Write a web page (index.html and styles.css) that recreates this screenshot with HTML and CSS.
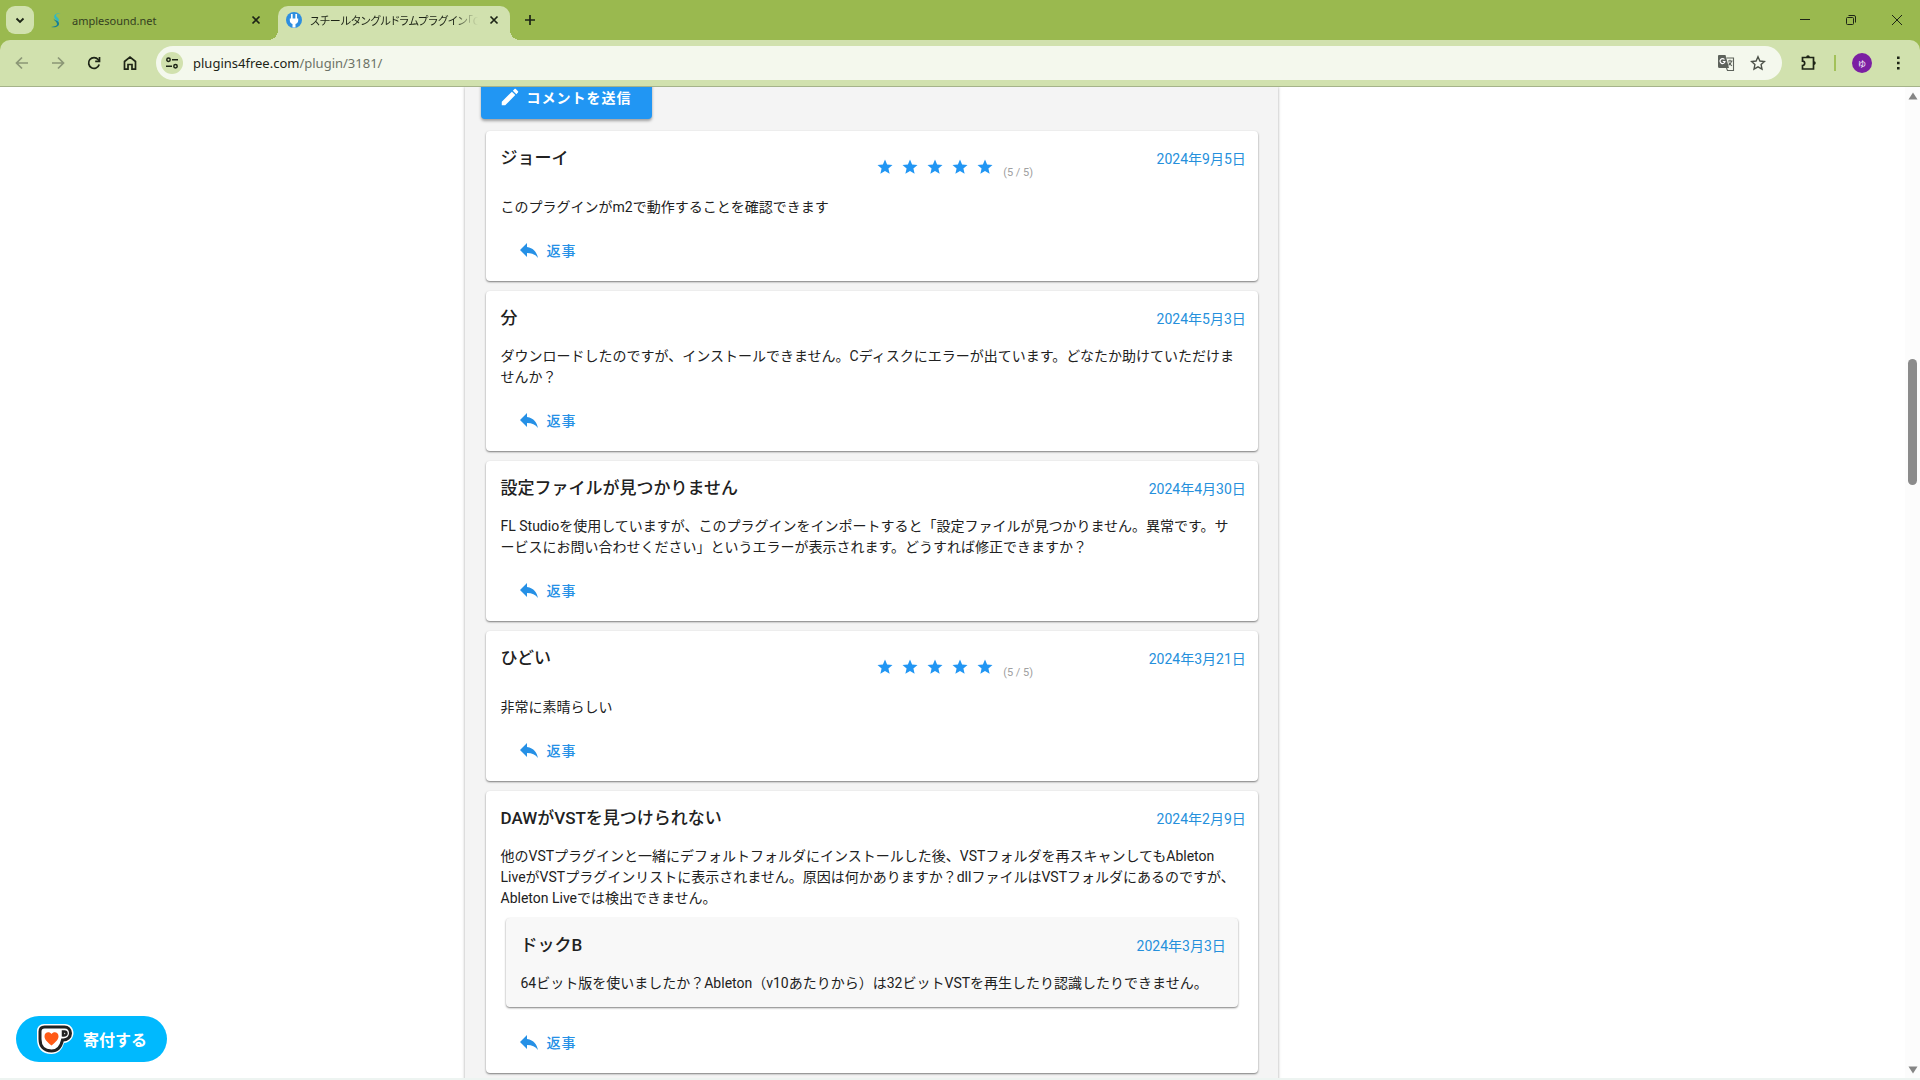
FILE: index.html
```html
<!DOCTYPE html>
<html lang="ja">
<head>
    <meta charset="UTF-8">
    <meta name="viewport" content="width=device-width, initial-scale=1.0">
    <title>スチールタングルドラムプラグイン「Cloud」</title>
    <link rel="stylesheet" href="styles.css">
</head>
<body>
    <!-- icons used more than once -->
    <svg class="defs" aria-hidden="true">
        <symbol id="i-star" viewBox="0 0 24 24"><path d="M12 17.27L18.18 21l-1.64-7.03L22 9.24l-7.19-.61L12 2 9.19 8.63 2 9.24l5.46 4.73L5.82 21z"/></symbol>
        <symbol id="i-reply" viewBox="0 0 24 24"><path d="M10 9V5l-7 7 7 7v-4.1c5 0 8.500 1.600 11 5.100-1-5-4-10-11-11z"/></symbol>
        <symbol id="i-close" viewBox="0 0 16 16"><path d="M4.500 4.500l7 7M11.500 4.500l-7 7" fill="none" stroke="currentColor" stroke-width="1.700"/></symbol>
    </svg>

    <header class="browser">
        <div class="tab-bar">
            <button class="tab-search" aria-label="タブを検索">
                <svg width="16" height="16" viewBox="0 0 16 16"><path d="M4.500 6.500L8 10l3.500-3.500" fill="none" stroke="currentColor" stroke-width="1.800"/></svg>
            </button>
            <div class="tab">
                <svg width="16" height="16" viewBox="0 0 16 16"><path d="M12.500 1C7 1 5.500 3.500 6.500 6c1 2 3 2.500 3 5l1.500-2.500C11 5.500 8 5 8 3.500 8 2 10 1.500 12.500 1z" fill="#2fb9c6"/><path d="M5.500 6.500C6 9 9 9.500 9 12c0 2-2.500 2.500-6 3 5.500 1 8.500-1 8-4-.500-2.500-4.500-2.500-5.500-4.500z" fill="#177f96"/></svg>
                <span class="tab-title">amplesound.net</span>
                <button class="tab-close" aria-label="タブを閉じる"><svg width="16" height="16"><use href="#i-close"/></svg></button>
            </div>
            <div class="tab active">
                <svg width="16" height="16" viewBox="0 0 16 16"><circle cx="8" cy="8" r="8" fill="#2d8ee0"/><path d="M5.800 2v5M10.200 2v5" stroke="#fff" stroke-width="1.700"/><path d="M3.800 6.500h8.400v2c0 1.800-1.200 3-2.700 3.500v3.500h-3V12C5 11.500 3.800 10.300 3.800 8.500z" fill="#fff"/></svg>
                <span class="tab-title">スチールタングルドラムプラグイン「Clou</span>
                <button class="tab-close" aria-label="タブを閉じる"><svg width="16" height="16"><use href="#i-close"/></svg></button>
            </div>
            <button class="new-tab" aria-label="新しいタブ">
                <svg width="16" height="16" viewBox="0 0 16 16"><path d="M8 3v10M3 8h10" fill="none" stroke="currentColor" stroke-width="1.700"/></svg>
            </button>
            <div class="window-buttons">
                <button aria-label="最小化"><svg class="line" width="12" height="12" viewBox="0 0 12 12"><path d="M1 5.500h10"/></svg></button>
                <button aria-label="元に戻す"><svg class="line" width="12" height="12" viewBox="0 0 12 12"><rect x="1.500" y="3.500" width="7" height="7" rx="1"/><path d="M3.500 1.500h5.500a1.500 1.500 0 0 1 1.500 1.500v5.500"/></svg></button>
                <button aria-label="閉じる"><svg class="line" width="12" height="12" viewBox="0 0 12 12"><path d="M1 1l10 10M11 1L1 11"/></svg></button>
            </div>
        </div>

        <div class="toolbar">
            <button class="nav off" aria-label="戻る"><svg width="16" height="16" viewBox="0 0 16 16"><path d="M14 8H3M8 2.500L2.500 8 8 13.500"/></svg></button>
            <button class="nav off" aria-label="進む"><svg width="16" height="16" viewBox="0 0 16 16"><path d="M2 8h11M8 2.500L13.500 8 8 13.500"/></svg></button>
            <button class="nav" aria-label="再読み込み"><svg width="16" height="16" viewBox="0 0 16 16"><path d="M13.200 9.500a5.400 5.400 0 1 1-1-5L13.500 6"/><path d="M13.500 2v4.300H9.200"/></svg></button>
            <button class="nav" aria-label="ホーム"><svg width="16" height="16" viewBox="0 0 16 16"><path d="M2.500 14.200V6.500L8 2l5.500 4.500v7.700H10V9.500H6v4.700z"/></svg></button>
            <div class="omnibox">
                <button class="site-info" aria-label="サイト情報">
                    <svg class="line" width="14" height="14" viewBox="0 0 14 14"><circle cx="3.500" cy="3.800" r="1.700"/><path d="M7 3.800h6M1 10.200h6"/><circle cx="10.500" cy="10.200" r="1.700"/></svg>
                </button>
                <div class="url">plugins4free.com<span>/plugin/3181/</span></div>
                <button class="box-icon" aria-label="翻訳">
                    <svg width="18" height="18" viewBox="0 0 18 18"><path d="M2 1h6.500l3.500 13H2.500A1.500 1.500 0 0 1 1 12.500V2a1 1 0 0 1 1-1z" fill="#5d625b"/><path d="M7.500 5.500A2.500 2.500 0 1 0 8 7.500H5.800" fill="none" stroke="#fff" stroke-width="1.200"/><path d="M9.500 4h7v12.500h-6l-1-2.500M11 7h4.500M13 5.800V7M14.500 7.300c-.500 2-1.500 3-3 4M11.800 8.500c.700 1.500 1.800 2.500 3.200 3.200" fill="none" stroke="#5d625b" stroke-width="1.100"/></svg>
                </button>
                <button class="box-icon" aria-label="ブックマーク">
                    <svg width="16" height="16" viewBox="0 0 16 16"><path d="M8 1.800l1.900 4.200 4.500.5-3.300 3.100.9 4.500L8 11.800l-4 2.300.9-4.500L1.600 6.500 6.100 6z" fill="none" stroke="currentColor" stroke-width="1.400"/></svg>
                </button>
            </div>
            <button class="nav extensions" aria-label="拡張機能"><svg width="18" height="18" viewBox="0 0 18 18"><path d="M2.500 3.500h11v11.500h-11v-3.500a2.200 2.200 0 0 0 0-4.400z"/><path d="M6.200 3a1.800 1.800 0 0 1 3.600 0zM14 7.300a1.800 1.800 0 0 1 0 3.600z" fill="currentColor" stroke="none"/></svg></button>
            <span class="divider"></span>
            <button class="avatar" aria-label="プロフィール">ゆ</button>
            <button class="nav menu" aria-label="メニュー"><svg width="16" height="16" viewBox="0 0 16 16"><path d="M7 1.500h2.600v2.600H7zM7 6.700h2.600v2.600H7zM7 11.900h2.600v2.600H7z" fill="currentColor" stroke="none"/></svg></button>
        </div>
    </header>

    <div class="viewport">
        <main class="layout">
            <section class="comments">
                <button class="submit-comment">
                    <svg viewBox="0 0 24 24"><path d="M20.710 7.040c.390-.390.390-1.040 0-1.410l-2.340-2.340c-.370-.390-1.020-.390-1.410 0l-1.840 1.830 3.750 3.750M3 17.250V21h3.750L17.810 9.930l-3.750-3.750z"/></svg>
                    コメントを送信
                </button>

                <article class="card">
                    <div class="card-head">
                        <h3>ジョーイ</h3>
                        <div class="rating">
                            <svg><use href="#i-star"/></svg>
                            <svg><use href="#i-star"/></svg>
                            <svg><use href="#i-star"/></svg>
                            <svg><use href="#i-star"/></svg>
                            <svg><use href="#i-star"/></svg>
                            <span>(5 / 5)</span>
                        </div>
                        <time datetime="2024-09-05">2024年9月5日</time>
                    </div>
                    <p>このプラグインがm2で動作することを確認できます</p>
                    <button class="reply"><svg><use href="#i-reply"/></svg>返事</button>
                </article>

                <article class="card">
                    <div class="card-head">
                        <h3>分</h3>
                        <time datetime="2024-05-03">2024年5月3日</time>
                    </div>
                    <p>ダウンロードしたのですが、インストールできません。Cディスクにエラーが出ています。どなたか助けていただけませんか？</p>
                    <button class="reply"><svg><use href="#i-reply"/></svg>返事</button>
                </article>

                <article class="card">
                    <div class="card-head">
                        <h3>設定ファイルが見つかりません</h3>
                        <time datetime="2024-04-30">2024年4月30日</time>
                    </div>
                    <p>FL Studioを使用していますが、このプラグインをインポートすると「設定ファイルが見つかりません。異常です。サービスにお問い合わせください」というエラーが表示されます。どうすれば修正できますか？</p>
                    <button class="reply"><svg><use href="#i-reply"/></svg>返事</button>
                </article>

                <article class="card">
                    <div class="card-head">
                        <h3>ひどい</h3>
                        <div class="rating">
                            <svg><use href="#i-star"/></svg>
                            <svg><use href="#i-star"/></svg>
                            <svg><use href="#i-star"/></svg>
                            <svg><use href="#i-star"/></svg>
                            <svg><use href="#i-star"/></svg>
                            <span>(5 / 5)</span>
                        </div>
                        <time datetime="2024-03-21">2024年3月21日</time>
                    </div>
                    <p>非常に素晴らしい</p>
                    <button class="reply"><svg><use href="#i-reply"/></svg>返事</button>
                </article>

                <article class="card">
                    <div class="card-head">
                        <h3>DAWがVSTを見つけられない</h3>
                        <time datetime="2024-02-09">2024年2月9日</time>
                    </div>
                    <p>他のVSTプラグインと一緒にデフォルトフォルダにインストールした後、VSTフォルダを再スキャンしてもAbleton LiveがVSTプラグインリストに表示されません。原因は何かありますか？dllファイルはVSTフォルダにあるのですが、Ableton Liveでは検出できません。</p>
                    <article class="card answer">
                        <div class="card-head">
                            <h3>ドックB</h3>
                            <time datetime="2024-03-03">2024年3月3日</time>
                        </div>
                        <p>64ビット版を使いましたか？Ableton（v10あたりから）は32ビットVSTを再生したり認識したりできません。</p>
                    </article>
                    <button class="reply"><svg><use href="#i-reply"/></svg>返事</button>
                </article>
            </section>
        </main>

        <div class="scrollbar">
            <svg width="10" height="8" viewBox="0 0 10 8"><path d="M5 .500L9.500 7.500h-9z"/></svg>
            <div class="thumb"></div>
            <svg class="down" width="10" height="8" viewBox="0 0 10 8"><path d="M5 7.500L.500.500h9z"/></svg>
        </div>
    </div>

    <button class="donate">
        <svg width="38" height="32" viewBox="0 0 38 32">
            <path d="M8 1h21c5 0 8.500 4 8.500 9s-4 9.500-9.500 10c-2 7-6 11-12.500 11C6 31 1 25 1 16V8c0-4 3-7 7-7z" fill="#fff"/>
            <path d="M8.500 4h20c3.500 0 6 2.500 6 6.300s-3 7-8 6.700c-1.500 7-4.500 11-11 11C8 28 4 23.500 4 16V8.500C4 5.500 6 4 8.500 4z" fill="#fff" stroke="#222" stroke-width="3"/>
            <path d="M27 8.500h1.500c1.300 0 2 .800 2 2s-1 2.300-3.500 2z" fill="#fff" stroke="#222" stroke-width="2.500"/>
            <path d="M15.500 22.500C11 19 8.500 16.500 8.500 13.300c0-4.500 5-5.300 7-2.300 2-3 7-2.200 7 2.300 0 3.200-2.500 5.700-7 9.200z" fill="#ff5a16"/>
        </svg>
        寄付する
    </button>
</body>
</html>
```
FILE: styles.css
```css
* {
    box-sizing: border-box;
}

body {
    margin: 0;
    height: 100vh;
    display: flex;
    flex-direction: column;
    overflow: hidden;
    background-color: #fff;
    border-bottom: 2px solid #edf4f1;
    color: #212121;
    font-family: Roboto, "Noto Sans CJK JP", sans-serif;
    font-size: 14px;
    line-height: 21px;
}

button {
    display: flex;
    align-items: center;
    justify-content: center;
    padding: 0;
    border: none;
    background: none;
    color: inherit;
    font-family: inherit;
    cursor: pointer;
}

svg {
    display: block;
    flex-shrink: 0;
    fill: currentColor;
}

.line {
    fill: none;
    stroke: currentColor;
}

.defs {
    position: absolute;
    width: 0;
    height: 0;
}

/* browser frame */
.browser {
    flex-shrink: 0;
    background-color: #9ab94f;
    color: #1d2416;
    font-family: "Noto Sans", "Noto Sans CJK JP", sans-serif;
}

.tab-bar {
    display: flex;
    align-items: center;
    height: 40px;
    padding-left: 6px;
}

.tab-search {
    width: 28px;
    height: 28px;
    margin-right: 2px;
    border-radius: 9px;
    background-color: #d1e1ae;
}

.tab {
    position: relative;
    display: flex;
    align-items: center;
    gap: 8px;
    width: 232px;
    height: 34px;
    margin-top: 6px;
    padding: 0 4px 6px 12px;
    font-size: 11px;
}

.tab.active {
    margin-left: 10px;
    padding: 0 8px 6px;
    border-radius: 10px 10px 0 0;
    background-color: #d1e1ae;
}

/* curved feet of the active tab */
.tab.active::before,
.tab.active::after {
    content: "";
    position: absolute;
    bottom: 0;
    width: 10px;
    height: 10px;
}

.tab.active::before {
    left: -10px;
    background: radial-gradient(circle at 0 0, #9ab94f 10px, #d1e1ae 10px);
}

.tab.active::after {
    right: -10px;
    background: radial-gradient(circle at 100% 0, #9ab94f 10px, #d1e1ae 10px);
}

.tab-title {
    flex: 1;
    min-width: 0;
    overflow: hidden;
    white-space: nowrap;
    color: #34401f;
}

.active .tab-title {
    color: #1d2416;
    font-feature-settings: "palt";
    mask-image: linear-gradient(to right, #000 85%, transparent);
}

.new-tab {
    width: 28px;
    height: 28px;
    margin: 0 auto 6px 6px;
    padding-top: 6px;
}

.window-buttons {
    display: flex;
}

.window-buttons button {
    width: 46px;
    height: 40px;
}

.toolbar {
    display: flex;
    align-items: center;
    height: 47px;
    padding: 0 4px;
    border-radius: 10px 10px 0 0;
    border-bottom: 1px solid #a5b38a;
    background-color: #d1e1ae;
}

.nav {
    width: 36px;
    height: 34px;
}

.nav svg {
    fill: none;
    stroke: currentColor;
    stroke-width: 1.7;
}

.nav.off {
    color: #8b9776;
}

.omnibox {
    display: flex;
    flex: 1;
    align-items: center;
    height: 34px;
    margin-left: 8px;
    padding: 0 8px 0 5px;
    border-radius: 17px;
    background-color: #f4f8ed;
}

.site-info {
    width: 22px;
    height: 22px;
    border-radius: 50%;
    background-color: #d1e1ae;
}

.site-info svg {
    stroke-width: 1.5;
}

.url {
    flex: 1;
    margin-left: 10px;
    font-size: 13px;
}

.url span {
    color: #6c7266;
}

.box-icon {
    width: 32px;
    height: 32px;
    color: #4c5148;
}

.extensions {
    margin-left: 9px;
}

.divider {
    width: 2px;
    height: 16px;
    margin: 0 16px 0 7px;
    background-color: #a2c159;
}

.avatar {
    width: 20px;
    height: 20px;
    border-radius: 50%;
    background-color: #7b1fa2;
    color: #fff;
    font-size: 8px;
}

.menu {
    margin-left: 8px;
}

/* page */
.viewport {
    display: flex;
    flex: 1;
    min-height: 0;
    overflow: hidden;
}

.layout {
    display: grid;
    grid-template-columns: 5fr 1fr;
    width: 100%;
    max-width: 976px;
    margin: 0 auto;
}

.comments {
    height: 1100px;
    padding: 0 16px;
    background-color: #f4f4f4;
    box-shadow: 0 0 3px rgba(0, 0, 0, 0.35);
}

.submit-comment {
    height: 44px;
    margin: -12px 0 12px;
    padding: 0 20px 0 18px;
    gap: 6px;
    border-radius: 4px;
    background-color: #2196f3;
    box-shadow: 0 2px 3px rgba(0, 0, 0, 0.35);
    color: #fff;
    font-size: 14px;
    font-weight: 700;
    letter-spacing: 1px;
}

.submit-comment svg {
    width: 22px;
    height: 22px;
}

.card {
    margin: 0 4px 10px 5px;
    padding: 0 12px 13px 15px;
    border-radius: 4px;
    background-color: #fff;
    box-shadow: 0 1px 2px rgba(0, 0, 0, 0.5);
}

.card-head {
    display: grid;
    grid-template-columns: 6fr 4fr 2fr;
    padding: 15px 0 13px;
}

.card-head h3 {
    margin: 0;
    font-size: 17px;
    font-weight: 500;
    line-height: 25px;
}

.card-head time {
    grid-column: 3;
    color: #2590dc;
    line-height: 27px;
    text-align: right;
    white-space: nowrap;
}

.rating {
    display: flex;
    align-items: center;
    gap: 7px;
    height: 38px;
    padding: 4px 0 0 3px;
    color: #2196f3;
}

.rating svg {
    width: 18px;
    height: 18px;
}

.rating span {
    padding: 10px 0 0 2px;
    color: #a0a0a0;
    font-size: 11px;
}

.card p {
    margin: 0;
    padding-right: 6px;
}

.reply {
    height: 36px;
    margin-top: 14px;
    padding: 0 16px;
    gap: 6px;
    color: #2590e6;
    font-size: 14px;
    font-weight: 500;
    letter-spacing: 1px;
}

.reply svg {
    width: 24px;
    height: 24px;
}

.answer {
    margin: 9px 8px 17px 5px;
    background-color: #f8f8f8;
}

.answer + .reply {
    margin-top: 0;
}

.scrollbar {
    display: flex;
    flex-direction: column;
    align-items: center;
    width: 15px;
    padding: 5px 0 4px;
    background-color: #fcfcfc;
    color: #858585;
}

.thumb {
    width: 9px;
    height: 126px;
    margin-top: 259px;
    border-radius: 5px;
    background-color: #8b8b8b;
}

.scrollbar .down {
    margin-top: auto;
}

.donate {
    position: fixed;
    left: 16px;
    bottom: 18px;
    height: 46px;
    padding: 0 20px;
    gap: 9px;
    border-radius: 23px;
    background-color: #00b9fe;
    color: #fff;
    font-size: 16px;
    font-weight: 700;
}
```
